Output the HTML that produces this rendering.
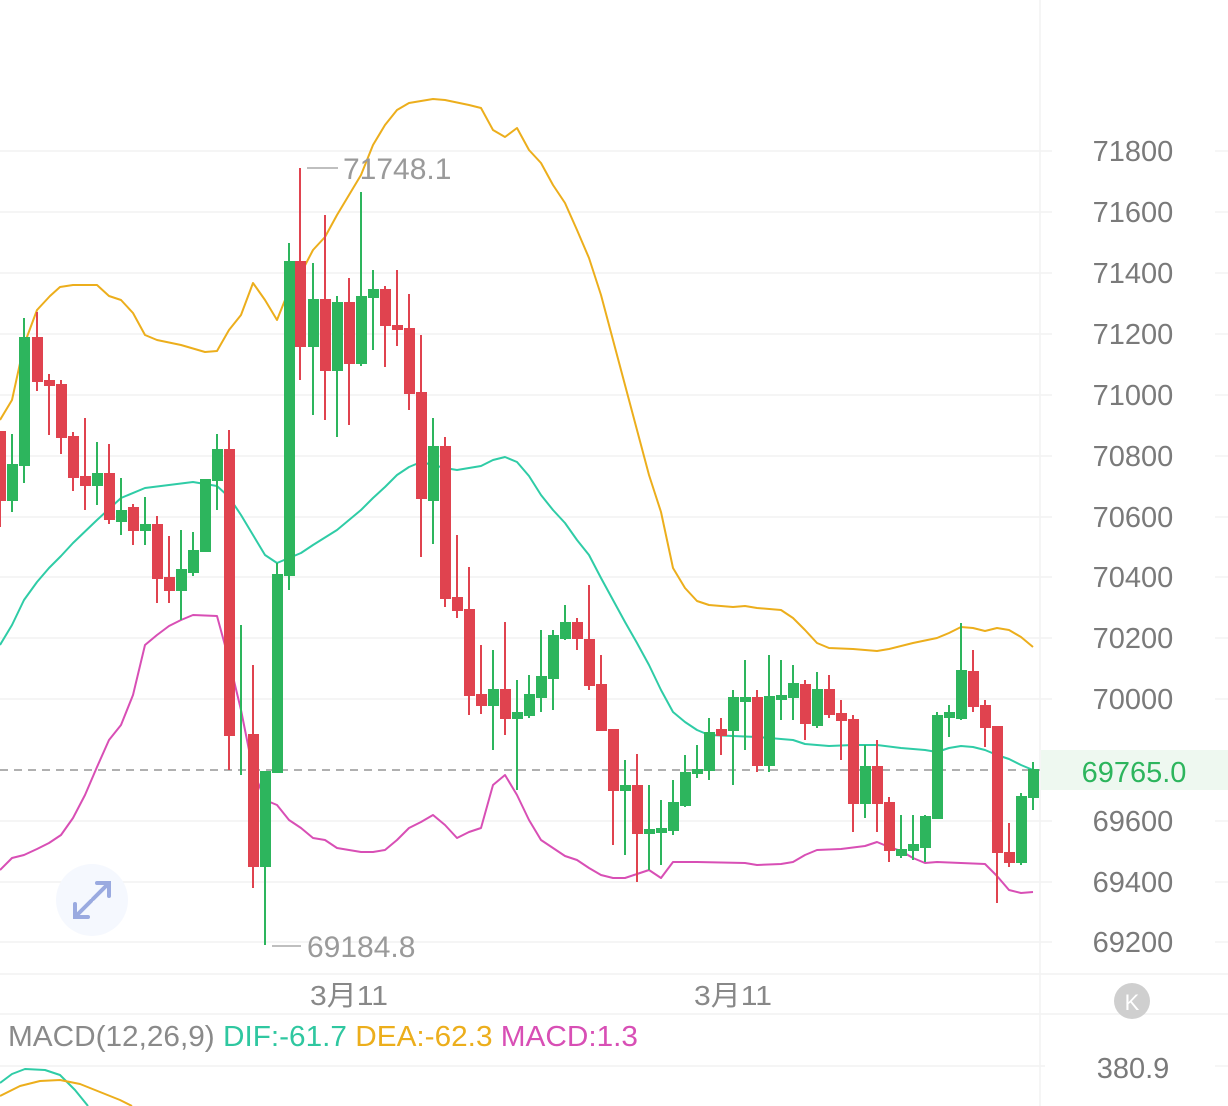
<!DOCTYPE html>
<html><head><meta charset="utf-8"><style>
html,body{margin:0;padding:0;background:#fff;width:1228px;height:1106px;overflow:hidden}
svg{display:block}
text{font-family:"Liberation Sans","Noto Sans CJK SC",sans-serif}
</style></head><body>
<svg width="1228" height="1106" viewBox="0 0 1228 1106" xmlns="http://www.w3.org/2000/svg">
<g stroke="#f2f2f2" stroke-width="1.5">
<line x1="0" y1="151" x2="1052" y2="151"/><line x1="0" y1="212" x2="1052" y2="212"/><line x1="0" y1="273" x2="1052" y2="273"/><line x1="0" y1="334" x2="1052" y2="334"/><line x1="0" y1="395" x2="1052" y2="395"/><line x1="0" y1="456" x2="1052" y2="456"/><line x1="0" y1="517" x2="1052" y2="517"/><line x1="0" y1="577" x2="1052" y2="577"/><line x1="0" y1="638" x2="1052" y2="638"/><line x1="0" y1="699" x2="1052" y2="699"/><line x1="0" y1="821" x2="1052" y2="821"/><line x1="0" y1="882" x2="1052" y2="882"/><line x1="0" y1="942" x2="1052" y2="942"/>
<line x1="1215" y1="151" x2="1228" y2="151"/><line x1="1215" y1="212" x2="1228" y2="212"/><line x1="1215" y1="273" x2="1228" y2="273"/><line x1="1215" y1="334" x2="1228" y2="334"/><line x1="1215" y1="395" x2="1228" y2="395"/><line x1="1215" y1="456" x2="1228" y2="456"/><line x1="1215" y1="517" x2="1228" y2="517"/><line x1="1215" y1="577" x2="1228" y2="577"/><line x1="1215" y1="638" x2="1228" y2="638"/><line x1="1215" y1="699" x2="1228" y2="699"/><line x1="1215" y1="821" x2="1228" y2="821"/><line x1="1215" y1="882" x2="1228" y2="882"/><line x1="1215" y1="942" x2="1228" y2="942"/>
<line x1="1040" y1="0" x2="1040" y2="1106"/>
<line x1="0" y1="974" x2="1228" y2="974"/><line x1="0" y1="1014" x2="1228" y2="1014"/><line x1="0" y1="1066" x2="1045" y2="1066"/><line x1="1215" y1="1066" x2="1228" y2="1066"/>
</g>
<g font-size="29" fill="#7a7a7a" text-anchor="middle">
<text x="1133" y="161">71800</text><text x="1133" y="222">71600</text><text x="1133" y="283">71400</text><text x="1133" y="344">71200</text><text x="1133" y="405">71000</text><text x="1133" y="466">70800</text><text x="1133" y="527">70600</text><text x="1133" y="587">70400</text><text x="1133" y="648">70200</text><text x="1133" y="709">70000</text><text x="1133" y="831">69600</text><text x="1133" y="892">69400</text><text x="1133" y="952">69200</text>
<text x="1133" y="1078">380.9</text>
</g>
<rect x="1041" y="750" width="187" height="40" fill="#eef8f0"/>
<text x="1134" y="782" font-size="29" fill="#2db55d" text-anchor="middle">69765.0</text>
<line x1="0" y1="770" x2="1040" y2="770" stroke="#b0b0b0" stroke-width="2" stroke-dasharray="8,6"/>
<g fill="none" stroke-width="2" stroke-linejoin="round">
<polyline stroke="#ecae1c" points="0,420 12,400 24,345 37,310 50,296 60,287 73,285 97,285 109,296 121,300 133,313 145,335 157,340 181,345 205,352 217,351 229,330 241,315 253,283 265,300 277,320 289,290 300,275 313,250 325,237 337,215 349,195 361,175 373,145 385,125 397,110 409,103 433,99 445,100 469,105 481,108 493,130 505,137 517,128 529,150 541,163 553,185 565,203 577,230 589,258 601,295 613,340 625,385 637,430 649,475 661,512 673,568 685,588 697,601 709,605 733,607 745,606 757,608 781,610 793,618 805,630 817,643 829,648 853,649 877,651 889,649 913,643 937,638 949,633 961,627 973,628 985,631 997,628 1009,630 1021,637 1033,647"/>
<polyline stroke="#2fcca6" points="0,645 12,625 24,600 37,582 49,568 61,556 73,543 97,520 121,498 145,488 169,485 193,482 217,486 229,497 241,515 253,535 265,555 277,563 289,558 301,553 313,545 337,530 349,520 361,510 373,498 385,487 397,475 409,467 421,462 445,468 457,470 481,466 493,460 505,457 517,462 529,476 541,495 553,510 565,523 577,540 589,555 601,578 613,600 625,622 637,643 649,665 661,690 673,712 685,722 697,730 709,735 733,736 757,737 781,739 793,740 805,744 829,746 853,745 877,745 901,748 925,750 937,752 949,748 961,746 973,747 985,750 997,755 1009,759 1021,765 1033,770"/>
<polyline stroke="#d84fb5" points="0,870 12,858 24,855 37,849 49,843 61,835 73,818 85,795 97,767 109,740 121,725 133,695 145,645 157,635 169,626 181,620 193,615 217,616 229,660 241,710 253,770 265,800 277,805 289,820 301,828 313,838 325,840 337,848 349,850 361,852 373,852 385,850 397,840 409,828 421,822 433,815 445,825 457,838 469,832 481,828 493,785 505,775 517,795 529,820 541,840 553,848 565,856 577,860 589,868 601,875 613,878 625,878 637,874 649,870 661,878 673,862 697,862 745,863 757,865 781,864 793,862 805,855 817,850 841,849 865,846 877,842 889,847 901,851 913,858 925,863 937,862 961,863 985,864 997,876 1009,890 1021,893 1033,892"/>
<polyline stroke="#2fcca6" points="0,1083 12,1074 25,1069 45,1070 60,1075 75,1090 88,1106"/>
<polyline stroke="#ecae1c" points="0,1096 20,1086 40,1081 60,1080 80,1084 100,1092 120,1100 132,1106"/>
</g>
<g stroke-width="2">
<g stroke="#e0434f" fill="#e0434f">
<line x1="0" y1="432" x2="0" y2="527"/><rect x="-4" y="432" width="9" height="68"/>
<line x1="37" y1="312" x2="37" y2="391"/><rect x="33" y="338" width="9" height="43"/>
<line x1="49" y1="374" x2="49" y2="435"/><rect x="45" y="381" width="9" height="4"/>
<line x1="61" y1="380" x2="61" y2="454"/><rect x="57" y="385" width="9" height="52"/>
<line x1="73" y1="432" x2="73" y2="491"/><rect x="69" y="437" width="9" height="40"/>
<line x1="85" y1="418" x2="85" y2="510"/><rect x="81" y="477" width="9" height="8"/>
<line x1="109" y1="444" x2="109" y2="524"/><rect x="105" y="474" width="9" height="45"/>
<line x1="133" y1="504" x2="133" y2="545"/><rect x="129" y="508" width="9" height="22"/>
<line x1="157" y1="516" x2="157" y2="603"/><rect x="153" y="525" width="9" height="53"/>
<line x1="169" y1="536" x2="169" y2="603"/><rect x="165" y="578" width="9" height="12"/>
<line x1="229" y1="430" x2="229" y2="770"/><rect x="225" y="450" width="9" height="285"/>
<line x1="253" y1="665" x2="253" y2="888"/><rect x="249" y="735" width="9" height="131"/>
<line x1="300" y1="168" x2="300" y2="380"/><rect x="296" y="262" width="9" height="84"/>
<line x1="325" y1="215" x2="325" y2="420"/><rect x="321" y="300" width="9" height="70"/>
<line x1="349" y1="278" x2="349" y2="425"/><rect x="345" y="303" width="9" height="60"/>
<line x1="385" y1="286" x2="385" y2="367"/><rect x="381" y="290" width="9" height="35"/>
<line x1="397" y1="270" x2="397" y2="346"/><rect x="393" y="326" width="9" height="3"/>
<line x1="409" y1="294" x2="409" y2="410"/><rect x="405" y="329" width="9" height="64"/>
<line x1="421" y1="335" x2="421" y2="557"/><rect x="417" y="393" width="9" height="105"/>
<line x1="445" y1="437" x2="445" y2="607"/><rect x="441" y="447" width="9" height="151"/>
<line x1="457" y1="535" x2="457" y2="618"/><rect x="453" y="598" width="9" height="12"/>
<line x1="469" y1="567" x2="469" y2="715"/><rect x="465" y="610" width="9" height="85"/>
<line x1="481" y1="645" x2="481" y2="714"/><rect x="477" y="695" width="9" height="10"/>
<line x1="505" y1="622" x2="505" y2="735"/><rect x="501" y="690" width="9" height="28"/>
<line x1="577" y1="618" x2="577" y2="650"/><rect x="573" y="623" width="9" height="15"/>
<line x1="589" y1="585" x2="589" y2="690"/><rect x="585" y="640" width="9" height="45"/>
<line x1="601" y1="655" x2="601" y2="730"/><rect x="597" y="685" width="9" height="45"/>
<line x1="613" y1="730" x2="613" y2="845"/><rect x="609" y="730" width="9" height="60"/>
<line x1="637" y1="754" x2="637" y2="882"/><rect x="633" y="786" width="9" height="47"/>
<line x1="721" y1="718" x2="721" y2="755"/><rect x="717" y="730" width="9" height="5"/>
<line x1="757" y1="690" x2="757" y2="772"/><rect x="753" y="698" width="9" height="67"/>
<line x1="805" y1="680" x2="805" y2="740"/><rect x="801" y="685" width="9" height="38"/>
<line x1="829" y1="675" x2="829" y2="718"/><rect x="825" y="690" width="9" height="24"/>
<line x1="841" y1="700" x2="841" y2="760"/><rect x="837" y="714" width="9" height="6"/>
<line x1="853" y1="715" x2="853" y2="832"/><rect x="849" y="720" width="9" height="83"/>
<line x1="877" y1="740" x2="877" y2="832"/><rect x="873" y="767" width="9" height="36"/>
<line x1="889" y1="797" x2="889" y2="862"/><rect x="885" y="803" width="9" height="47"/>
<line x1="973" y1="650" x2="973" y2="712"/><rect x="969" y="672" width="9" height="34"/>
<line x1="985" y1="700" x2="985" y2="747"/><rect x="981" y="706" width="9" height="21"/>
<line x1="997" y1="727" x2="997" y2="903"/><rect x="993" y="727" width="9" height="125"/>
<line x1="1009" y1="823" x2="1009" y2="867"/><rect x="1005" y="853" width="9" height="9"/>
</g>
<g stroke="#2db55d" fill="#2db55d">
<line x1="12" y1="434" x2="12" y2="512"/><rect x="8" y="465" width="9" height="35"/>
<line x1="24" y1="318" x2="24" y2="483"/><rect x="20" y="338" width="9" height="127"/>
<line x1="97" y1="442" x2="97" y2="505"/><rect x="93" y="474" width="9" height="11"/>
<line x1="121" y1="478" x2="121" y2="535"/><rect x="117" y="511" width="9" height="10"/>
<line x1="145" y1="497" x2="145" y2="545"/><rect x="141" y="525" width="9" height="5"/>
<line x1="181" y1="530" x2="181" y2="620"/><rect x="177" y="570" width="9" height="20"/>
<line x1="193" y1="532" x2="193" y2="576"/><rect x="189" y="551" width="9" height="21"/>
<line x1="205" y1="480" x2="205" y2="551"/><rect x="201" y="480" width="9" height="71"/>
<line x1="217" y1="434" x2="217" y2="510"/><rect x="213" y="450" width="9" height="30"/>
<line x1="241" y1="625" x2="241" y2="775"/>
<line x1="265" y1="772" x2="265" y2="945"/><rect x="261" y="772" width="9" height="94"/>
<line x1="277" y1="563" x2="277" y2="772"/><rect x="273" y="575" width="9" height="197"/>
<line x1="289" y1="243" x2="289" y2="590"/><rect x="285" y="262" width="9" height="313"/>
<line x1="313" y1="263" x2="313" y2="415"/><rect x="309" y="300" width="9" height="46"/>
<line x1="337" y1="296" x2="337" y2="437"/><rect x="333" y="303" width="9" height="67"/>
<line x1="361" y1="192" x2="361" y2="366"/><rect x="357" y="297" width="9" height="66"/>
<line x1="373" y1="270" x2="373" y2="350"/><rect x="369" y="290" width="9" height="7"/>
<line x1="433" y1="418" x2="433" y2="544"/><rect x="429" y="447" width="9" height="53"/>
<line x1="493" y1="650" x2="493" y2="750"/><rect x="489" y="690" width="9" height="15"/>
<line x1="517" y1="680" x2="517" y2="790"/><rect x="513" y="713" width="9" height="5"/>
<line x1="529" y1="675" x2="529" y2="718"/><rect x="525" y="695" width="9" height="20"/>
<line x1="541" y1="630" x2="541" y2="712"/><rect x="537" y="677" width="9" height="20"/>
<line x1="553" y1="630" x2="553" y2="710"/><rect x="549" y="636" width="9" height="42"/>
<line x1="565" y1="605" x2="565" y2="640"/><rect x="561" y="623" width="9" height="15"/>
<line x1="625" y1="760" x2="625" y2="855"/><rect x="621" y="786" width="9" height="4"/>
<line x1="649" y1="785" x2="649" y2="870"/><rect x="645" y="830" width="9" height="3"/>
<line x1="661" y1="800" x2="661" y2="865"/><rect x="657" y="829" width="9" height="3"/>
<line x1="673" y1="780" x2="673" y2="835"/><rect x="669" y="803" width="9" height="27"/>
<line x1="685" y1="755" x2="685" y2="807"/><rect x="681" y="773" width="9" height="32"/>
<line x1="697" y1="745" x2="697" y2="778"/><rect x="693" y="770" width="9" height="3"/>
<line x1="709" y1="718" x2="709" y2="780"/><rect x="705" y="733" width="9" height="37"/>
<line x1="733" y1="690" x2="733" y2="785"/><rect x="729" y="698" width="9" height="32"/>
<line x1="745" y1="660" x2="745" y2="750"/><rect x="741" y="698" width="9" height="3"/>
<line x1="769" y1="655" x2="769" y2="772"/><rect x="765" y="697" width="9" height="68"/>
<line x1="781" y1="660" x2="781" y2="720"/><rect x="777" y="696" width="9" height="3"/>
<line x1="793" y1="665" x2="793" y2="720"/><rect x="789" y="684" width="9" height="13"/>
<line x1="817" y1="672" x2="817" y2="728"/><rect x="813" y="690" width="9" height="35"/>
<line x1="865" y1="745" x2="865" y2="818"/><rect x="861" y="767" width="9" height="36"/>
<line x1="901" y1="815" x2="901" y2="858"/><rect x="897" y="850" width="9" height="5"/>
<line x1="913" y1="815" x2="913" y2="860"/><rect x="909" y="845" width="9" height="5"/>
<line x1="925" y1="815" x2="925" y2="862"/><rect x="921" y="817" width="9" height="30"/>
<line x1="937" y1="712" x2="937" y2="818"/><rect x="933" y="716" width="9" height="102"/>
<line x1="949" y1="705" x2="949" y2="737"/><rect x="945" y="713" width="9" height="4"/>
<line x1="961" y1="623" x2="961" y2="720"/><rect x="957" y="671" width="9" height="47"/>
<line x1="1021" y1="793" x2="1021" y2="865"/><rect x="1017" y="797" width="9" height="65"/>
<line x1="1033" y1="762" x2="1033" y2="810"/><rect x="1029" y="770" width="9" height="27"/>
</g>
</g>
<line x1="307" y1="168" x2="338" y2="168" stroke="#aaa" stroke-width="1.5"/>
<text x="343" y="179" font-size="30" fill="#9a9a9a">71748.1</text>
<line x1="272" y1="946" x2="301" y2="946" stroke="#aaa" stroke-width="1.5"/>
<text x="307" y="957" font-size="30" fill="#9a9a9a">69184.8</text>
<circle cx="92" cy="900" r="36" fill="#f5f8fe"/>
<g stroke="#9aaae0" stroke-width="4" fill="none" stroke-linecap="round">
<line x1="76" y1="916" x2="91" y2="901"/><polyline points="75,904 75,917 88,917"/>
<line x1="93" y1="899" x2="108" y2="884"/><polyline points="97,883 109,883 109,896"/>
</g>
<g font-size="28" fill="#888">
<text x="310" y="1005" textLength="78" lengthAdjust="spacingAndGlyphs">3月11</text><text x="694" y="1005" textLength="78" lengthAdjust="spacingAndGlyphs">3月11</text>
</g>
<circle cx="1132" cy="1001" r="18" fill="#cfcfcf"/>
<text x="1132" y="1010" font-size="22" fill="#fff" text-anchor="middle">K</text>
<text x="8" y="1046" font-size="29" textLength="630" lengthAdjust="spacingAndGlyphs"><tspan fill="#8a8a8a">MACD(12,26,9) </tspan><tspan fill="#2fc7a0">DIF:-61.7 </tspan><tspan fill="#ecae1c">DEA:-62.3 </tspan><tspan fill="#d84fb5">MACD:1.3</tspan></text>
</svg>
</body></html>
